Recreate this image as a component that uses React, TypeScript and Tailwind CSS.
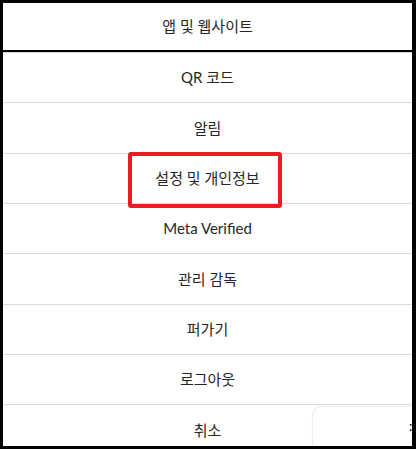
import React from "react";

const items = ["QR 코드", "알림", "설정 및 개인정보", "Meta Verified", "관리 감독", "퍼가기", "로그아웃", "취소"];

export default function App() {
  return (
    <div className="w-[416px] h-[449px] bg-black pt-[3px] pl-[3px] pr-[4px] pb-[3px]">
      <div
        className="relative w-full h-full bg-white overflow-hidden text-[15px] text-[#262626]"
        style={{ fontFamily: 'Lato, "Noto Sans CJK KR", sans-serif' }}
      >
        <div className="h-[49px] border-b-2 border-black flex items-center justify-center">
          앱 및 웹사이트
        </div>
        {items.map((label) => (
          <div
            key={label}
            className="h-[50.33px] shrink-0 border-t border-[#dbdbdb] flex items-center justify-center"
          >
            {label}
          </div>
        ))}

        {/* red highlight around the settings row */}
        <div className="absolute left-[125px] top-[149px] w-[154px] h-[56px] border-4 border-[#ec1c24] rounded-[3px]" />

        {/* card peeking in from the bottom right */}
        <div className="absolute left-[309px] top-[403px] w-[160px] h-[80px] bg-white border border-[#ececec] rounded-[10px] shadow-[0_0_3px_rgba(0,0,0,0.04)]">
          <span className="absolute left-[96px] top-[10px] text-[13px] text-black">:</span>
        </div>
      </div>
    </div>
  );
}
